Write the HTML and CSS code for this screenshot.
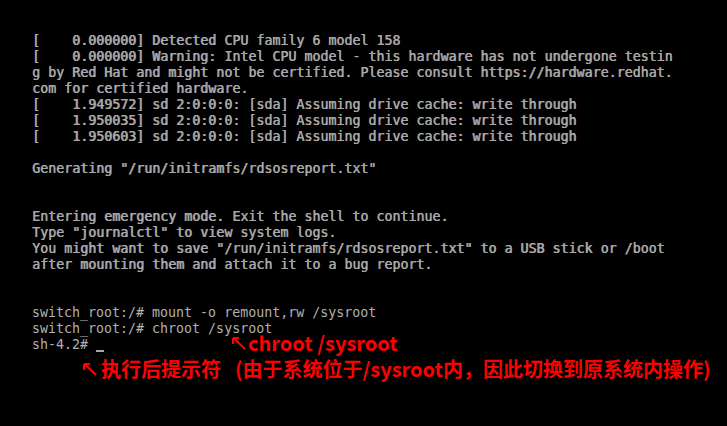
FILE: index.html
```html
<!DOCTYPE html>
<html lang="zh-CN">
<head>
    <meta charset="UTF-8">
    <title>emergency mode</title>
    <link rel="stylesheet" href="styles.css">
</head>
<body>
    <div class="screen">
<pre class="console">[    0.000000] Detected CPU family 6 model 158
[    0.000000] Warning: Intel CPU model - this hardware has not undergone testin
g by Red Hat and might not be certified. Please consult https://hardware.redhat.
com for certified hardware.
[    1.949572] sd 2:0:0:0: [sda] Assuming drive cache: write through
[    1.950035] sd 2:0:0:0: [sda] Assuming drive cache: write through
[    1.950603] sd 2:0:0:0: [sda] Assuming drive cache: write through

Generating "/run/initramfs/rdsosreport.txt"


Entering emergency mode. Exit the shell to continue.
Type "journalctl" to view system logs.
You might want to save "/run/initramfs/rdsosreport.txt" to a USB stick or /boot
after mounting them and attach it to a bug report.


<span class="shell">switch_root:/# mount -o remount,rw /sysroot</span>
<span class="shell">switch_root:/# chroot /sysroot</span>
<span class="shell">sh-4.2# </span><span class="cursor"></span></pre>

        <!-- red notes drawn over the screen -->
        <div class="note note-chroot">
            <svg class="arrow" width="16" height="15" viewBox="0 0 16 15">
                <path d="M14 13 L2.5 2" />
                <path d="M2 2 L2 8 M2 2 L8 2" />
            </svg>
            <span>chroot /sysroot</span>
        </div>
        <div class="note note-prompt">
            <svg class="arrow" width="16" height="15" viewBox="0 0 16 15">
                <path d="M14 13 L2.5 2" />
                <path d="M2 2 L2 8 M2 2 L8 2" />
            </svg>
            <span class="label">执行后提示符</span>
            <span class="why">(由于系统位于/sysroot内，因此切换到原系统内操作)</span>
        </div>
    </div>
</body>
</html>
```

FILE: styles.css
```css
body {
    margin: 0;
    background: #000;
}

.screen {
    position: relative;
    width: 727px;
    height: 426px;
    overflow: hidden;
    background: #000;
}

.console {
    display: inline-block;
    margin: 0;
    padding: 33px 0 0 32px;
    font-family: "DejaVu Sans Mono", "Liberation Mono", monospace;
    font-size: 13.3px;
    line-height: 16px;
    color: #a8a8a8;
    text-shadow: 0.6px 0 0 #a8a8a8;
}

.shell {
    color: #b0b0b0;
    text-shadow: none;
}

.cursor {
    display: inline-block;
    width: 8px;
    height: 16px;
    vertical-align: top;
    box-shadow: inset 0 -2px 0 0 #a8a8a8;
    transform: translateY(-1px);
}

.note {
    position: absolute;
    display: flex;
    align-items: center;
    font-family: "Noto Sans CJK SC", "Noto Sans", sans-serif;
    font-weight: 700;
    font-size: 20px;
    line-height: 16px;
    color: #ff0000;
    white-space: nowrap;
}

.note .arrow {
    flex: none;
    margin-right: 1px;
}

.note .arrow path {
    fill: none;
    stroke: #ff0000;
    stroke-width: 2.2;
}

.note-chroot {
    left: 231px;
    top: 335px;
}

.note-prompt {
    left: 82px;
    top: 361px;
}

.note-prompt .label {
    margin-left: 2px;
}

.note-prompt .why {
    margin-left: 14px;
}
```
